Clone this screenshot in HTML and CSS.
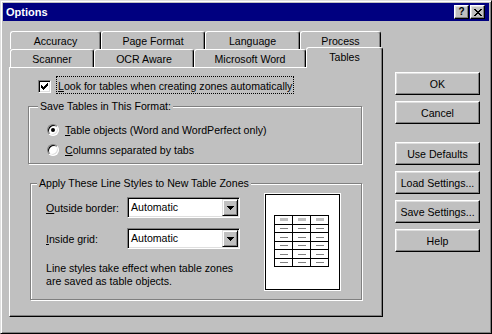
FILE: index.html
```html
<!DOCTYPE html>
<html>
<head>
<meta charset="utf-8">
<title>Options</title>
<link rel="stylesheet" href="styles.css">
</head>
<body>
<div class="window">
  <div class="titlebar">
    <span class="title">Options</span>
    <div class="caption-btns">
      <span class="cbtn help">?</span>
      <span class="cbtn close"><svg width="8" height="7" viewBox="0 0 8 7"><path d="M0 0h2v1h-2zM6 0h2v1h-2zM1 1h2v1h-2zM5 1h2v1h-2zM2 2h4v1h-4zM3 3h2v1h-2zM2 4h4v1h-4zM1 5h2v1h-2zM5 5h2v1h-2zM0 6h2v1h-2zM6 6h2v1h-2z"/></svg></span>
    </div>
  </div>
  <div class="main">
    <div class="sheet">
      <div class="tabrow">
        <div class="tab t-acc">Accuracy</div>
        <div class="tab t-page">Page Format</div>
        <div class="tab t-lang">Language</div>
        <div class="tab t-proc">Process</div>
      </div>
      <div class="tabrow">
        <div class="tab t-scan">Scanner</div>
        <div class="tab t-ocr">OCR Aware</div>
        <div class="tab t-word">Microsoft Word</div>
        <div class="tab t-tables active">Tables</div>
      </div>
      <div class="panel">
        <div class="check-row">
          <span class="checkbox"><svg width="7" height="7" viewBox="0 0 7 7"><path d="M6 0h1v1h-1zM5 1h2v1h-2zM0 2h1v1h-1zM4 2h3v1h-3zM0 3h2v1h-2zM3 3h3v1h-3zM0 4h5v1h-5zM1 5h3v1h-3zM2 6h1v1h-1z"/></svg></span>
          <span class="focus"><u>L</u>ook for tables when creating zones automatically</span>
        </div>
        <div class="group g1">
          <span class="legend">Save Tables in This Format:</span>
          <div class="radio-row"><span class="radio on"></span><span><u>T</u>able objects (Word and WordPerfect only)</span></div>
          <div class="radio-row"><span class="radio"></span><span><u>C</u>olumns separated by tabs</span></div>
        </div>
        <div class="group g2">
          <span class="legend">Apply These Line Styles to New Table Zones</span>
          <div class="g2-left">
            <div class="field">
              <span class="flabel"><u>O</u>utside border:</span>
              <div class="combo"><span class="ctext">Automatic</span><span class="dropbtn"><svg width="7" height="4" viewBox="0 0 7 4"><path d="M0 0h7v1h-7zM1 1h5v1h-5zM2 2h3v1h-3zM3 3h1v1h-1z"/></svg></span></div>
            </div>
            <div class="field">
              <span class="flabel"><u>I</u>nside grid:</span>
              <div class="combo"><span class="ctext">Automatic</span><span class="dropbtn"><svg width="7" height="4" viewBox="0 0 7 4"><path d="M0 0h7v1h-7zM1 1h5v1h-5zM2 2h3v1h-3zM3 3h1v1h-1z"/></svg></span></div>
            </div>
            <p class="note">Line styles take effect when table zones<br>are saved as table objects.</p>
          </div>
          <div class="preview">
            <svg width="73" height="94" viewBox="0 0 73 94">
              <g fill="#c0c0c0">
                <rect x="14" y="23" width="8" height="3"/>
                <rect x="32" y="23" width="8" height="3"/>
                <rect x="50" y="23" width="8" height="3"/>
              </g>
              <g fill="#808080">
                <rect x="14" y="33" width="8" height="1"/><rect x="32" y="33" width="8" height="1"/><rect x="50" y="33" width="8" height="1"/>
                <rect x="14" y="42" width="8" height="1"/><rect x="32" y="42" width="8" height="1"/><rect x="50" y="42" width="8" height="1"/>
                <rect x="14" y="50" width="8" height="1"/><rect x="32" y="50" width="8" height="1"/><rect x="50" y="50" width="8" height="1"/>
                <rect x="14" y="59" width="8" height="1"/><rect x="32" y="59" width="8" height="1"/><rect x="50" y="59" width="8" height="1"/>
                <rect x="14" y="67" width="8" height="1"/><rect x="32" y="67" width="8" height="1"/><rect x="50" y="67" width="8" height="1"/>
              </g>
              <g stroke="#000" stroke-width="1" fill="none">
                <rect x="8.5" y="20.5" width="54" height="51"/>
                <path d="M26.5 20.5V71.5M44.5 20.5V71.5M8.5 29.5H62.5M8.5 37.5H62.5M8.5 46.5H62.5M8.5 54.5H62.5M8.5 63.5H62.5"/>
              </g>
            </svg>
          </div>
        </div>
      </div>
    </div>
    <div class="buttons">
      <div class="btn">OK</div>
      <div class="btn">Cancel</div>
      <div class="btn spaced">Use Defaults</div>
      <div class="btn">Load Settings...</div>
      <div class="btn">Save Settings...</div>
      <div class="btn">Help</div>
    </div>
  </div>
</div>
</body>
</html>
```
FILE: styles.css
```css
* { box-sizing: border-box; }
html, body { margin: 0; padding: 0; }
body {
  width: 492px;
  height: 334px;
  background: #c0c0c0;
  font-family: "Liberation Sans", Arial, sans-serif;
  font-size: 10.6px;
  color: #000;
}
u { text-decoration: underline; text-underline-offset: 1px; }

.window {
  width: 492px;
  height: 334px;
  border: 1px solid;
  border-color: #dfdfdf #000 #000 #dfdfdf;
  box-shadow: inset 1px 1px #fff, inset -1px -1px #808080;
  padding: 2px;
  display: flex;
  flex-direction: column;
}

.titlebar {
  height: 18px;
  background: #000080;
  color: #fff;
  display: flex;
  align-items: center;
  justify-content: space-between;
  padding: 0 4px 0 3px;
}
.title { font-weight: bold; font-size: 11px; }
.caption-btns { display: flex; gap: 1px; }
.cbtn {
  width: 15px;
  height: 14px;
  background: #c0c0c0;
  color: #000;
  border: 1px solid;
  border-color: #fff #000 #000 #fff;
  box-shadow: inset -1px -1px #808080, inset 1px 1px #dfdfdf;
  display: flex;
  align-items: center;
  justify-content: center;
  font-weight: bold;
  font-size: 10px;
  line-height: 10px;
}
.cbtn svg { display: block; }

.main {
  display: flex;
  padding: 10px 0 0 6px;
}
.sheet { width: 374px; display: flex; flex-direction: column; }
.tabrow { display: flex; height: 18px; padding-left: 1px; }
.tab {
  height: 18px;
  border: 1px solid;
  border-bottom: none;
  border-color: #fff #000 #000 #fff;
  border-radius: 3px 3px 0 0;
  box-shadow: inset -1px 0 #808080;
  background: #c0c0c0;
  text-align: center;
  padding-top: 1px;
  line-height: 16px;
  white-space: nowrap;
}
.t-acc { width: 91px; }
.t-page { width: 104px; }
.t-lang { width: 95px; }
.t-proc { width: 81px; }
.t-scan { width: 84px; }
.t-ocr { width: 100px; }
.t-word { width: 112px; }
.t-tables { width: 77px; }
.tab.active {
  position: relative;
  z-index: 2;
  height: 21px;
  margin-top: -2px;
}

.panel {
  height: 250px;
  border: 1px solid;
  border-color: #fff #000 #000 #fff;
  box-shadow: inset -1px -1px #808080;
  display: flex;
  flex-direction: column;
}

.check-row {
  display: flex;
  align-items: flex-start;
  margin: 8px 0 0 28px;
  height: 18px;
}
.checkbox {
  width: 13px;
  height: 13px;
  margin-top: 4px;
  margin-right: 5px;
  background: #fff;
  border: 1px solid;
  border-color: #808080 #fff #fff #808080;
  box-shadow: inset 1px 1px #000, inset -1px -1px #dfdfdf;
  padding: 2px 0 0 2px;
}
.checkbox svg { display: block; }
.focus {
  height: 18px;
  border: 1px dotted #000;
  padding: 3px 1px 0 1px;
  line-height: 13px;
  white-space: nowrap;
}

.group {
  position: relative;
  border: 1px solid #808080;
  box-shadow: inset 1px 1px #fff, 1px 1px #fff;
}
.legend {
  position: absolute;
  top: -7px;
  background: #c0c0c0;
  padding: 0 2px;
  line-height: 13px;
  white-space: nowrap;
}
.g1 {
  margin: 12px 0 0 18px;
  width: 334px;
  height: 58px;
  padding: 13px 0 0 18px;
}
.g1 .legend { left: 9px; }
.radio-row {
  display: flex;
  align-items: center;
  height: 20px;
}
.radio {
  position: relative;
  width: 12px;
  height: 12px;
  margin-right: 6px;
  border-radius: 50%;
  background: #fff;
  border: 1px solid;
  border-color: #808080 #fff #fff #808080;
  box-shadow: inset 1px 1px #000, inset -1px -1px #dfdfdf;
}
.radio.on::after {
  content: "";
  position: absolute;
  left: 3px;
  top: 3px;
  width: 4px;
  height: 4px;
  border-radius: 50%;
  background: #000;
}

.g2 {
  margin: 19px 0 0 20px;
  width: 332px;
  height: 117px;
  padding: 10px 0 0 15px;
  display: flex;
  align-items: flex-start;
}
.g2 .legend { left: 6px; }
.g2-left {
  width: 219px;
  padding-top: 3px;
  display: flex;
  flex-direction: column;
  gap: 10px;
}
.field { display: flex; align-items: center; height: 21px; }
.flabel { width: 81px; white-space: nowrap; }
.combo {
  width: 113px;
  height: 21px;
  background: #fff;
  border: 1px solid;
  border-color: #808080 #fff #fff #808080;
  box-shadow: inset 1px 1px #000, inset -1px -1px #dfdfdf;
  padding: 1px;
  display: flex;
}
.ctext { flex: 1; padding-left: 2px; line-height: 17px; }
.dropbtn {
  width: 16px;
  height: 17px;
  background: #c0c0c0;
  border: 1px solid;
  border-color: #dfdfdf #000 #000 #dfdfdf;
  box-shadow: inset 1px 1px #fff, inset -1px -1px #808080;
  display: flex;
  align-items: center;
  justify-content: center;
}
.dropbtn svg { display: block; }
.note {
  margin: 3px 0 0 0;
  line-height: 13px;
  white-space: nowrap;
}
.preview {
  width: 75px;
  height: 96px;
  background: #fff;
  border: 1px solid #000;
  box-shadow: 0 0 0 1px #fff;
}
.preview svg { display: block; }

.buttons {
  margin: 41px 0 0 12px;
  display: flex;
  flex-direction: column;
  gap: 6px;
}
.btn {
  width: 85px;
  height: 23px;
  border: 1px solid;
  border-color: #fff #000 #000 #fff;
  box-shadow: inset -1px -1px #808080, inset 1px 1px #dfdfdf;
  display: flex;
  align-items: center;
  justify-content: center;
  white-space: nowrap;
}
.btn.spaced { margin-top: 12px; }
```
